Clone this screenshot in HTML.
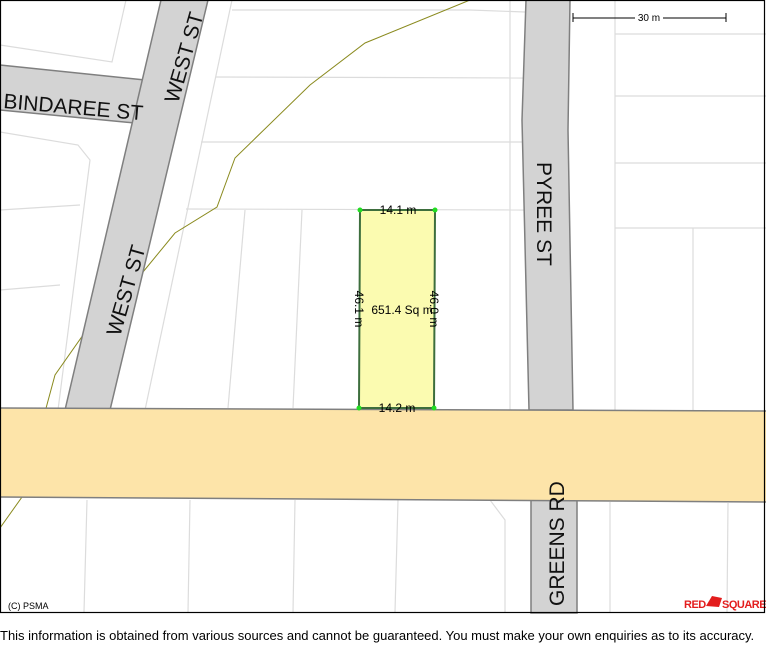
<!DOCTYPE html>
<html><head><meta charset="utf-8"><style>
html,body{margin:0;padding:0;background:#fff;width:766px;height:660px;overflow:hidden}
svg{position:absolute;left:0;top:0}
.f{position:absolute;left:0px;top:628px;font:13px "Liberation Sans",sans-serif;color:#000;white-space:nowrap}
</style></head><body>
<svg width="766" height="660" viewBox="0 0 766 660" font-family="Liberation Sans, sans-serif">
<rect x="0" y="0" width="766" height="613" fill="#fff"/>
<g stroke="#dcdcdc" stroke-width="1.2" fill="none">
<path d="M0 45 L112 62 L126 0"/>
<path d="M0 132 L78 145 L90 160 L58 410"/>
<path d="M0 210 L80 205"/>
<path d="M0 290 L60 285"/>
<path d="M232 0 L145 410"/>
<path d="M232 10 L470 10 L525 12"/>
<path d="M216 77 L525 78"/>
<path d="M201 142 L525 142"/>
<path d="M186 209 L525 210"/>
<path d="M245 210 L228 408"/>
<path d="M302 210 L293 408"/>
<path d="M510 0 L510 410"/>
<path d="M615 0 L615 410 M615 34 L766 34 M615 96 L766 96 M615 163 L766 163 M615 228 L766 228 M693 228 L693 410"/>
<path d="M87 500 L84 612 M190 500 L188 612 M295 500 L293 612 M398 500 L395 612 M490 500 L505 520 L505 612 M610 502 L610 612 M728 503 L727 612"/>
</g>
<path d="M0 528 L22 497 L55 375 L95 318 L143 272 L175 233 L217 207 L235 158 L310 85 L365 43 L470 0" fill="none" stroke="#8a8a1e" stroke-width="1"/>
<polygon points="0,65 145,80 135,123 0,110" fill="#d3d3d3"/>
<path d="M0 65 L145 80 M0 110 L135 123" stroke="#7f7f7f" stroke-width="1.5"/>
<polygon points="161,0 208,0 110,410 65,410" fill="#d3d3d3" stroke="#7f7f7f" stroke-width="1.5"/>
<polygon points="526,0 570,0 568,130 573,410 529,410 522,120" fill="#d3d3d3" stroke="#7f7f7f" stroke-width="1.5"/>
<rect x="531" y="495" width="46" height="118" fill="#d3d3d3" stroke="#7f7f7f" stroke-width="1.5"/>
<polygon points="0,408 766,411 766,502 0,497" fill="#fde4a9"/>
<path d="M0 408 L766 411 M0 497 L766 502" stroke="#7f7f7f" stroke-width="1.5"/>
<polygon points="360,210 435,210 434,408 359,408" fill="#fbfbb0" stroke="#3d6e3d" stroke-width="2"/>
<g fill="#22dd22"><circle cx="360" cy="210" r="2.5"/><circle cx="435" cy="210" r="2.5"/><circle cx="434" cy="408" r="2.5"/><circle cx="359" cy="408" r="2.5"/></g>
<g font-size="12" fill="#000">
<text x="398" y="214" text-anchor="middle">14.1 m</text>
<text x="397" y="412" text-anchor="middle">14.2 m</text>
<text x="402" y="314" text-anchor="middle">651.4 Sq m</text>
<text transform="translate(355,309) rotate(90)" text-anchor="middle">46.1 m</text>
<text transform="translate(430,309) rotate(90)" text-anchor="middle">46.0 m</text>
</g>
<g font-size="21" fill="#111">
<text transform="translate(3,108) rotate(5)">BINDAREE ST</text>
<text transform="translate(178,104) rotate(-74)">WEST ST</text>
<text transform="translate(120,337) rotate(-74)">WEST ST</text>
<text transform="translate(537,162) rotate(90)">PYREE ST</text>
<text transform="translate(564,606) rotate(-90)">GREENS RD</text>
</g>
<path d="M573 13 V22 M573 18 H726 M726 13 V22" stroke="#000" stroke-width="1"/>
<rect x="635" y="11" width="28" height="12" fill="#fff"/>
<text x="649" y="21" font-size="10" text-anchor="middle">30 m</text>
<text x="8" y="609" font-size="9">(C) PSMA</text>
<text x="684" y="608" font-size="11" font-weight="bold" fill="#e31d1d" letter-spacing="-0.5">RED</text>
<path d="M706 606 L712 596 L722 598 L719 607 Z" fill="#e31d1d"/>
<text x="722" y="608" font-size="11" font-weight="bold" fill="#e31d1d" letter-spacing="-0.5">SQUARE</text>
<rect x="0.5" y="0.5" width="764" height="612" fill="none" stroke="#000" stroke-width="1.2"/>
</svg>
<div class="f">This information is obtained from various sources and cannot be guaranteed. You must make your own enquiries as to its accuracy.</div>
</body></html>
